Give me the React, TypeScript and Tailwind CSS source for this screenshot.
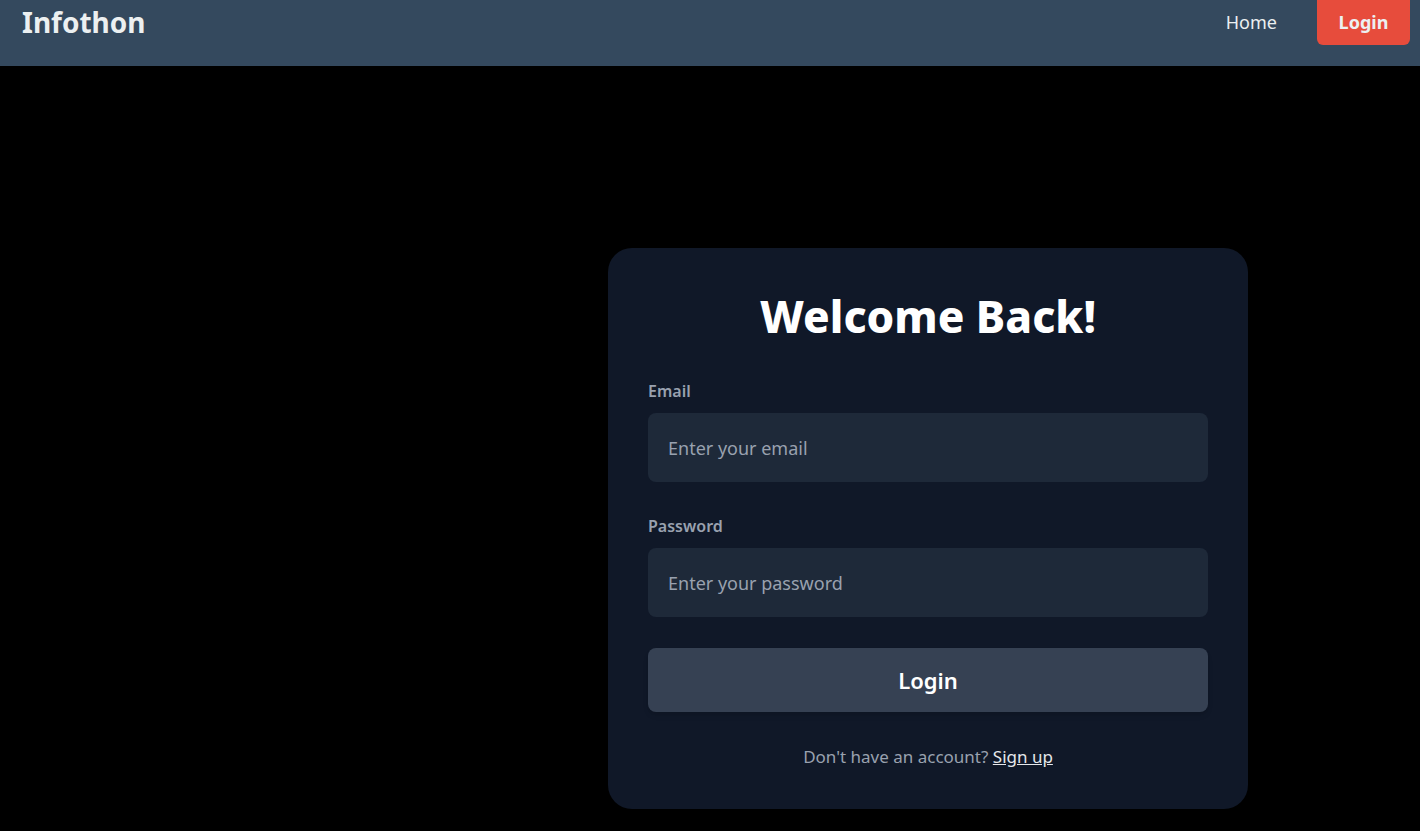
import React from "react";

const font = { fontFamily: '"Noto Sans", "Open Sans", sans-serif' };

const Header: React.FC = () => {
  return (
    <header className="flex h-[66px] items-start justify-between bg-[#34495e] pl-[22px] pr-[10px]">
      <h1 className="mt-[3px] text-[28px] font-bold leading-[38px] text-[#ecf0f1]">
        Infothon
      </h1>
      <nav className="flex items-start">
        <a href="#" className="mr-10 mt-[9px] text-lg leading-[26px] text-[#ecf0f1]">
          Home
        </a>
        <a
          href="#"
          className="flex h-[45px] w-[93px] items-center justify-center rounded-b-md bg-[#e74c3c] pb-[2px] text-lg font-bold text-[#ecf0f1]"
        >
          Login
        </a>
      </nav>
    </header>
  );
};

const Field: React.FC<{ label: string; type: string; placeholder: string }> = ({
  label,
  type,
  placeholder,
}) => {
  return (
    <div className="flex flex-col">
      <label className="mb-[10px] text-base font-semibold leading-6 text-gray-400">
        {label}
      </label>
      <input
        type={type}
        placeholder={placeholder}
        className="h-[69px] rounded-lg bg-gray-800 px-5 text-lg text-white placeholder:text-gray-400 focus:outline-none"
      />
    </div>
  );
};

export default function App() {
  return (
    <div className="min-h-screen bg-black" style={font}>
      <Header />
      <main className="pl-[608px] pt-[182px]">
        <div className="w-[640px] rounded-3xl bg-gray-900 px-10 pb-[39px] pt-[40px]">
          {/* Title */}
          <h2 className="text-center text-[44px] font-extrabold leading-[56px] text-white">
            Welcome Back!
          </h2>

          <form className="mt-[35px] flex flex-col gap-[32px]">
            <Field label="Email" type="email" placeholder="Enter your email" />
            <Field label="Password" type="password" placeholder="Enter your password" />
            <button
              type="button"
              className="mt-[-1px] h-[64px] rounded-lg bg-gray-700 text-[22px] font-semibold text-white shadow-md"
            >
              Login
            </button>
          </form>

          <p className="mt-[32px] text-center text-[17px] text-gray-400">
            Don't have an account?{" "}
            <a href="#" className="text-gray-200 underline">
              Sign up
            </a>
          </p>
        </div>
      </main>
    </div>
  );
}
